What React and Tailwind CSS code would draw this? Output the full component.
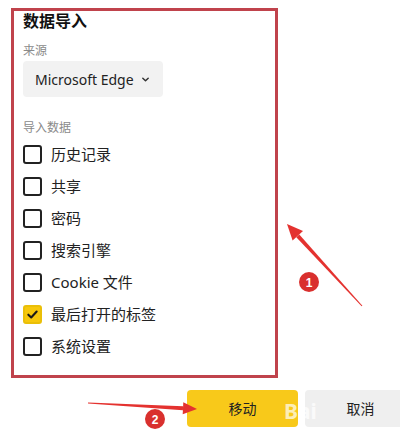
const items = [
  { label: "历史记录", checked: false },
  { label: "共享", checked: false },
  { label: "密码", checked: false },
  { label: "搜索引擎", checked: false },
  { label: "Cookie 文件", checked: false },
  { label: "最后打开的标签", checked: true },
  { label: "系统设置", checked: false },
];

function Checkbox({ checked }) {
  if (checked) {
    return (
      <span className="flex h-[19px] w-[19px] items-center justify-center rounded-[3px] border-2 border-[#eabf08] bg-[#f7c80c]">
        <svg width="13" height="13" viewBox="0 0 14 14" fill="none">
          <path d="M2.5 7.2 L5.6 10.2 L11.5 3.8" stroke="#1a1a1a" strokeWidth="2.2" strokeLinecap="round" strokeLinejoin="round" />
        </svg>
      </span>
    );
  }
  return <span className="h-[19px] w-[19px] rounded-[3px] border-2 border-[#222]" />;
}

function Annotations() {
  return (
    <svg className="pointer-events-none absolute inset-0" width="400" height="441" viewBox="0 0 400 441">
      {/* arrow 1 */}
      <polygon points="296.3,237.2 299.3,234.5 362.4,305.7 361.6,306.3" fill="#e4322f" />
      <polygon points="287,224 292.6,240.5 303,231.1" fill="#e4322f" />
      <circle cx="309" cy="282" r="10" fill="#d9302e" />
      <text x="309" y="286.5" textAnchor="middle" fontSize="12" fontWeight="700" fill="#fff" fontFamily="Liberation Sans, sans-serif">1</text>
      {/* arrow 2 */}
      <polygon points="183.1,406.2 182.9,410.2 88,403.6 88,402.4" fill="#e4322f" />
      <polygon points="197,409 183.3,402.2 182.7,414.2" fill="#e4322f" />
      <circle cx="155" cy="419" r="10" fill="#d9302e" />
      <text x="155" y="423.5" textAnchor="middle" fontSize="12" fontWeight="700" fill="#fff" fontFamily="Liberation Sans, sans-serif">2</text>
    </svg>
  );
}

export default function App() {
  return (
    <div
      className="relative h-[441px] w-[400px] overflow-hidden bg-white text-[#1f1f1f]"
      style={{ fontFamily: '"Noto Sans", "Noto Sans CJK SC", sans-serif' }}
    >
      <div className="ml-[11px] mt-[8px] h-[370px] w-[267px] border-[3px] border-[#c0434c] pl-[9px]">
        <h1 className="text-[16px] font-bold leading-[20px] text-[#111]">数据导入</h1>
        <p className="mt-[12px] text-[12px] leading-[16px] text-[#8a8a8a]">来源</p>
        <div className="mt-[2px] flex h-[36px] w-[140px] items-center rounded-[4px] bg-[#f2f2f2] pl-[12px] pr-[13px]">
          <span className="text-[14px] text-[#222]">Microsoft Edge</span>
          <svg className="ml-auto" width="9" height="9" viewBox="0 0 10 10" fill="none">
            <path d="M2 3.5 L5 6.5 L8 3.5" stroke="#333" strokeWidth="1.6" strokeLinecap="round" strokeLinejoin="round" />
          </svg>
        </div>
        <p className="mt-[23px] text-[12px] leading-[16px] text-[#8a8a8a]">导入数据</p>
        <ul className="mt-[2px]">
          {items.map((item) => (
            <li key={item.label} className="flex h-[32px] items-center gap-[9px]">
              <Checkbox checked={item.checked} />
              <span className="text-[15px] text-[#222]">{item.label}</span>
            </li>
          ))}
        </ul>
      </div>

      <div className="ml-[187px] mt-[12px] flex gap-[7px]">
        <button className="h-[37px] w-[111px] shrink-0 rounded-[4px] bg-[#f8c91a] text-[14px] text-[#222]">移动</button>
        <button className="h-[37px] w-[111px] shrink-0 rounded-[4px] bg-[#efefef] text-[14px] text-[#222]">取消</button>
      </div>

      <span className="pointer-events-none absolute left-[284px] top-[396px] text-[21px] font-bold text-white/70">Bai</span>

      <Annotations />
    </div>
  );
}
